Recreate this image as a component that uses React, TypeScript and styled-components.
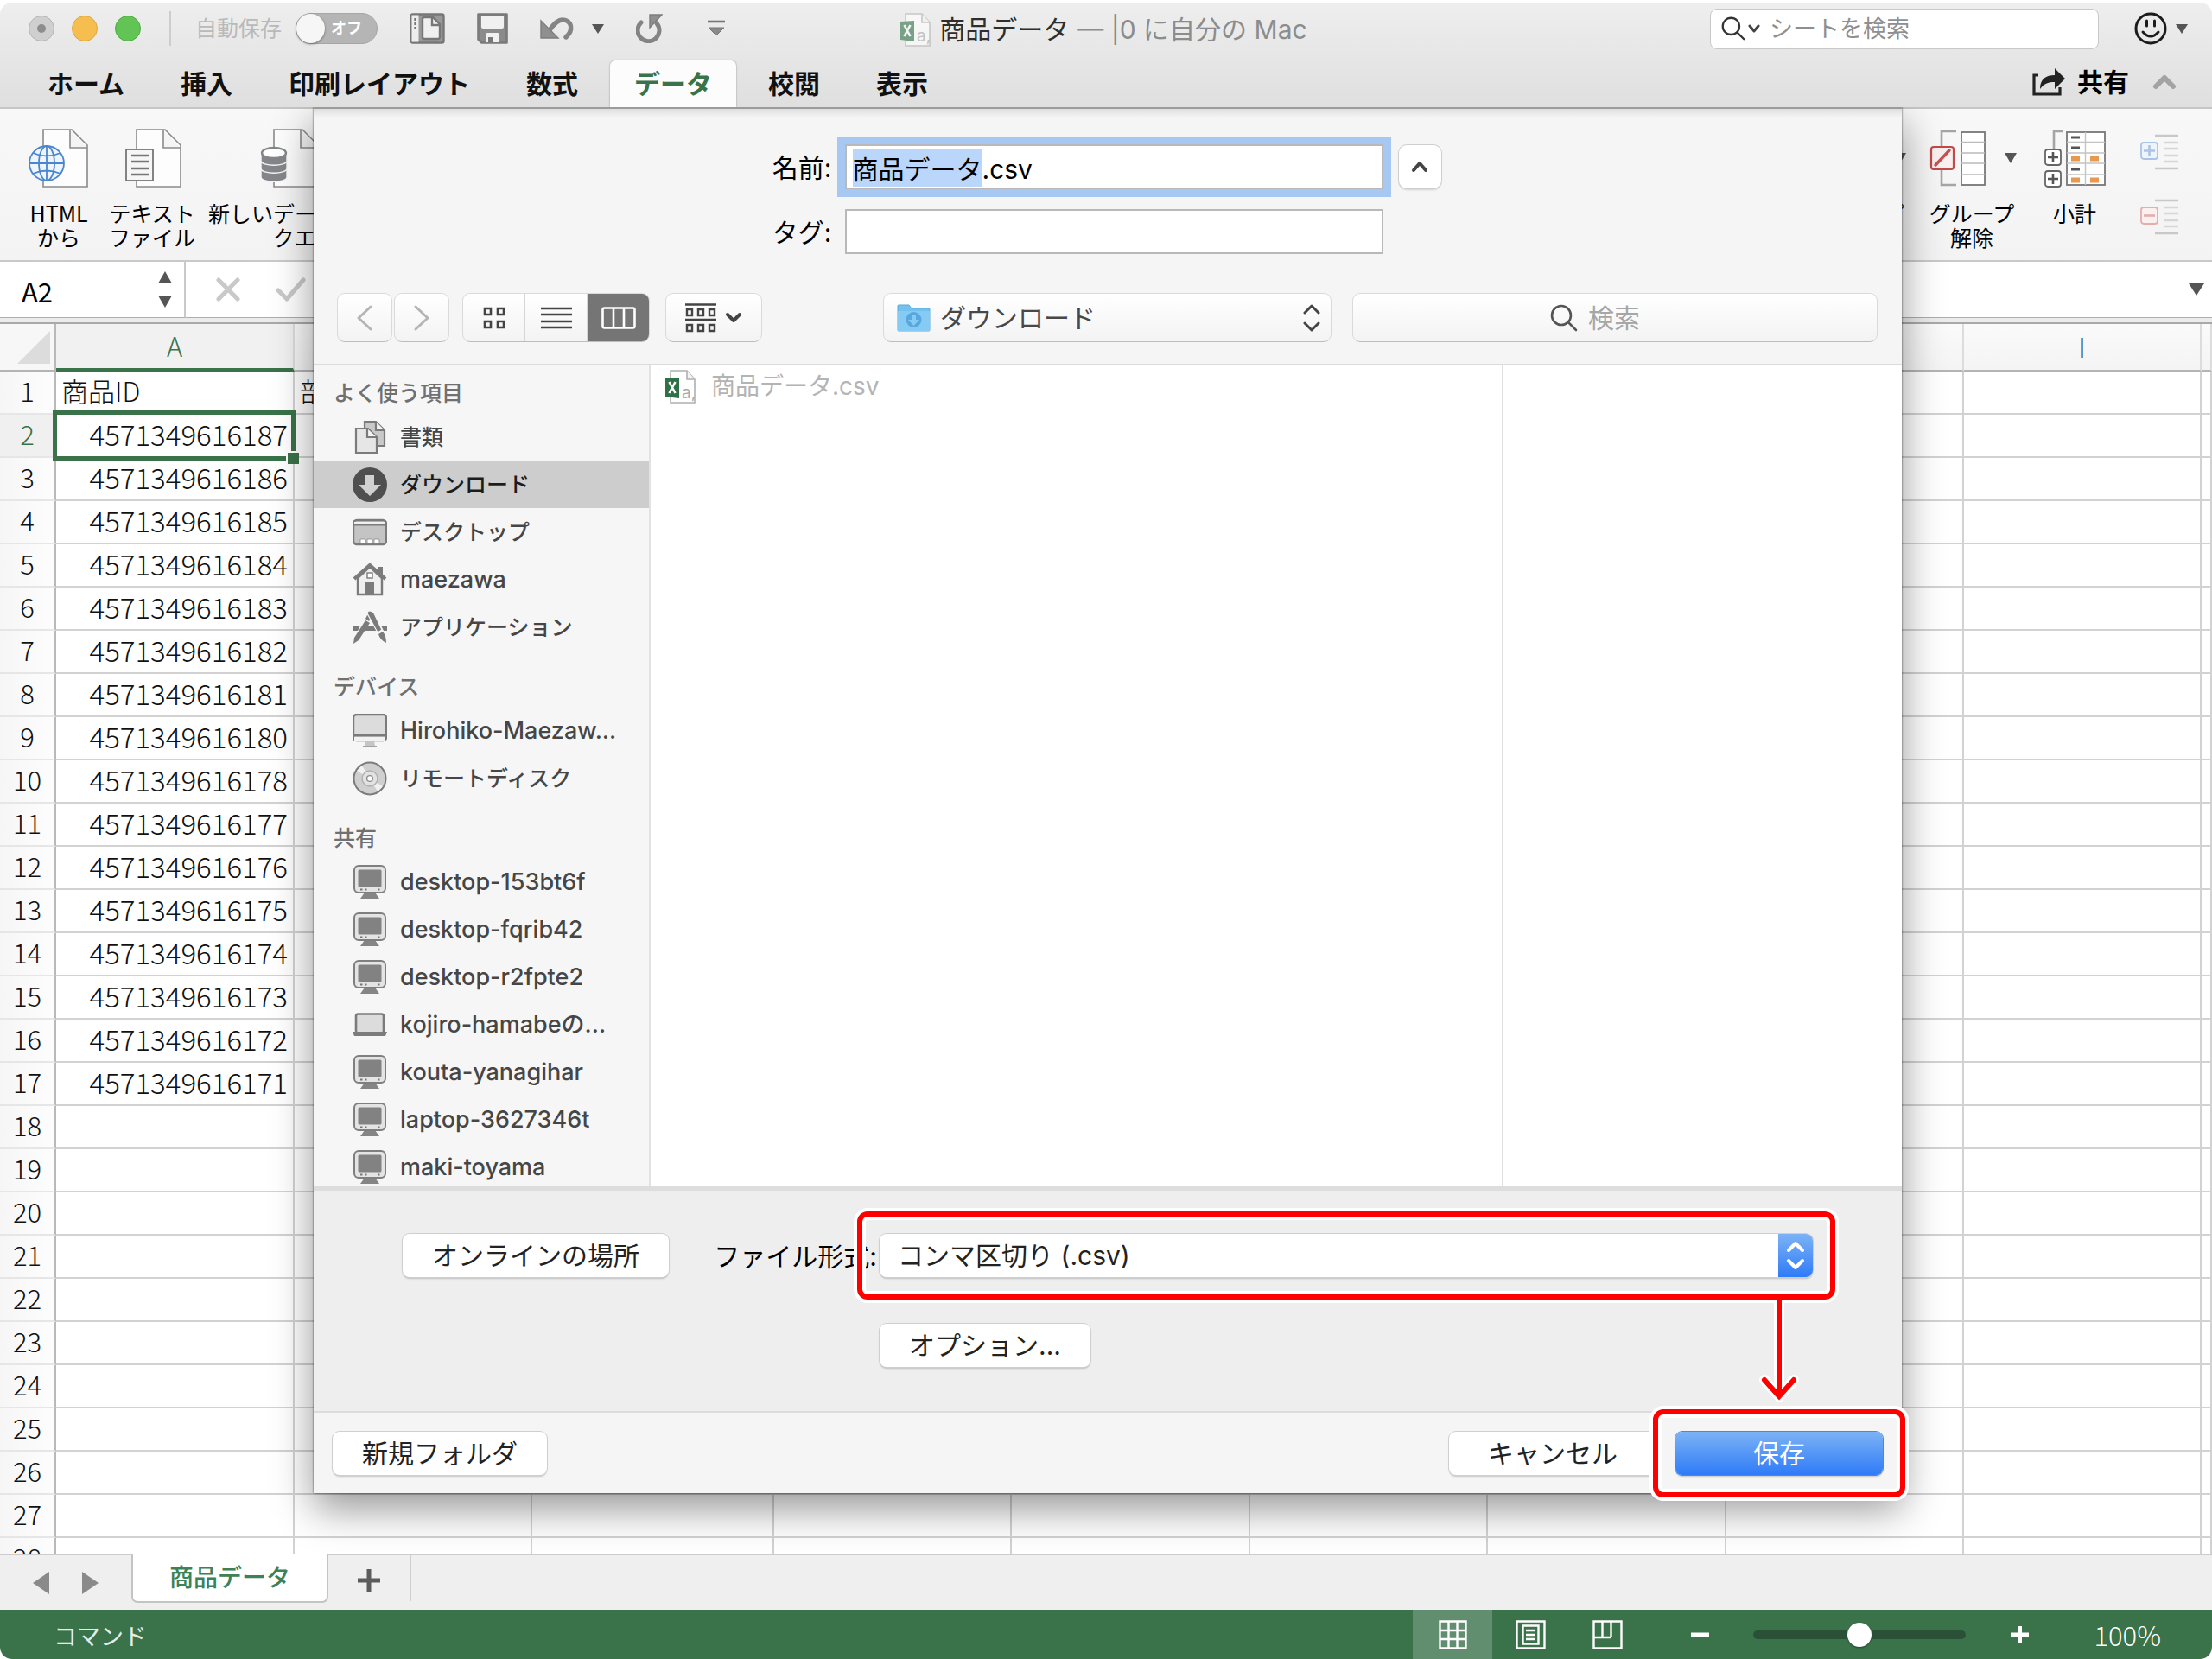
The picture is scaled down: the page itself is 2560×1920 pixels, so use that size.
import React, { useEffect, useRef } from 'react';
import styled, { createGlobalStyle } from 'styled-components';

const ui = `Inter, "Noto Sans CJK JP", sans-serif`;
const jp = `"Noto Sans CJK JP", sans-serif`;
const green = '#3a7249';

const GlobalStyle = createGlobalStyle`
  *, *::before, *::after { box-sizing: border-box; }
  html, body { margin: 0; background: #fff; }
  body { font-family: ${ui}; font-size: 30px; line-height: 44px; color: #000; }
  button, input, select { font: inherit; color: inherit; margin: 0; padding: 0; }
  button { background: none; border: 0; cursor: default; white-space: nowrap; }
  svg { display: block; flex: none; }
`;

const Window = styled.div`
  height: 100vh;
  padding-top: 3px;
  display: flex;
  flex-direction: column;
  overflow: hidden;
`;

/* ---------- title bar ---------- */

const TitleBar = styled.header`
  flex: none;
  background: linear-gradient(#eeeeee, #dfdfdf);
  border-bottom: 2px solid #c6c6c6;
  border-radius: 14px 14px 0 0;
`;

const TitleRow = styled.div`
  height: 60px;
  display: grid;
  grid-template-columns: 1fr auto 1fr;
  align-items: center;
`;

const QuickTools = styled.div`
  display: flex;
  align-items: center;
  gap: 37px;
  padding-left: 33px;
`;

const Lights = styled.div`
  display: flex;
  align-items: center;
  gap: 20px;
  margin-right: -4px;
`;

const Light = styled.button<{ $fill: string; $edge: string }>`
  width: 30px;
  height: 30px;
  border-radius: 50%;
  background: ${p => p.$fill};
  border: 1px solid ${p => p.$edge};
  display: grid;
  place-items: center;
`;

const Dot = styled.span`
  width: 10px;
  height: 10px;
  border-radius: 50%;
  background: #8d8d8d;
`;

const AutoSave = styled.label`
  display: flex;
  align-items: center;
  gap: 16px;
  padding-left: 28px;
  border-left: 2px solid #cdcdcd;
  height: 40px;
  font-size: 25px;
  color: #b9b9b9;
`;

const Toggle = styled.span`
  position: relative;
  width: 95px;
  height: 36px;
  border-radius: 18px;
  background: #b5b5b5;
  border: 1px solid #a6a6a6;
  color: #fff;
  font-size: 18px;
  line-height: 34px;
  font-weight: 700;
  padding-left: 40px;
  input {
    appearance: none;
    position: absolute;
    left: 0;
    top: 0;
    width: 33px;
    height: 34px;
    border-radius: 50%;
    background: #f6f6f6;
    box-shadow: 0 1px 3px rgba(0, 0, 0, 0.4);
  }
`;

const ToolButton = styled.button`
  display: flex;
  align-items: center;
  gap: 20px;
`;

const DocTitle = styled.h1`
  margin: 0;
  padding: 2px 5px 0 0;
  display: flex;
  align-items: center;
  gap: 10px;
  font-size: 30px;
  line-height: 44px;
  font-weight: 400;
  color: #2e2e2e;
  white-space: pre;
  span { color: #8c8c8c; }
`;

const TitleRight = styled.div`
  display: flex;
  align-items: center;
  justify-content: flex-end;
  gap: 41px;
  padding-right: 28px;
`;

const SheetSearch = styled.label`
  display: flex;
  align-items: center;
  width: 450px;
  height: 47px;
  padding-left: 12px;
  border: 1px solid #c8c8c8;
  border-radius: 8px;
  background: #fff;
  input {
    flex: 1;
    min-width: 0;
    border: 0;
    outline: 0;
    background: none;
    padding: 2px 0 0 8px;
    font-size: 27px;
  }
  input::placeholder { color: #8f8f8f; opacity: 1; }
`;

const FaceButton = styled.button`
  display: flex;
  align-items: center;
  gap: 10px;
`;

const TabRow = styled.nav`
  display: flex;
  align-items: stretch;
  gap: 9px;
  padding: 7px 40px 0 27px;
`;

const RibbonTab = styled.button<{ $active?: boolean }>`
  height: 54px;
  padding: 0 28px 4px;
  font-family: ${jp};
  font-weight: 700;
  color: ${p => (p.$active ? green : '#111')};
  background: ${p => (p.$active ? '#fcfcfc' : 'none')};
  border-radius: 6px 6px 0 0;
  box-shadow: ${p => (p.$active ? '0 0 2px rgba(0,0,0,.4)' : 'none')};
`;

const ShareGroup = styled.div`
  margin-left: auto;
  display: flex;
  align-items: center;
  gap: 26px;
  padding-bottom: 4px;
  font-weight: 700;
`;

const ShareButton = styled.button`
  display: flex;
  align-items: center;
  gap: 14px;
  font-weight: 700;
`;

/* ---------- ribbon ---------- */

const Workbook = styled.main`
  position: relative;
  flex: 1;
  min-height: 0;
  display: flex;
  flex-direction: column;
`;

const Ribbon = styled.section`
  flex: none;
  display: flex;
  justify-content: space-between;
  height: 177px;
  padding: 23px 38px 0 25px;
  background: linear-gradient(#f8f8f8, #f3f3f3);
  border-bottom: 2px solid #c9c9c9;
`;

const RibbonGroup = styled.div<{ $gap: number }>`
  display: flex;
  align-items: flex-start;
  gap: ${p => p.$gap}px;
`;

const RibbonButton = styled.button`
  min-width: 86px;
  display: flex;
  flex-direction: column;
  align-items: center;
  gap: 15px;
  font-family: ${jp};
  font-size: 25px;
  line-height: 28px;
  white-space: pre;
`;

const IconRow = styled.span`
  display: flex;
  align-items: center;
  gap: 22px;
`;

const SmallStack = styled.div`
  display: flex;
  flex-direction: column;
  gap: 33px;
  padding: 6px 0 0 9px;
`;

/* ---------- formula bar ---------- */

const FormulaBar = styled.section`
  flex: none;
  display: flex;
  height: 72px;
  padding-bottom: 5px;
  background: #ececec;
  border-bottom: 2px solid #a9a9a9;
`;

const NameBox = styled.label`
  display: flex;
  align-items: center;
  width: 215px;
  padding: 0 13px 0 25px;
  background: #fff;
  border-right: 2px solid #c9c9c9;
  border-bottom: 1px solid #adadad;
  input {
    width: 100%;
    border: 0;
    outline: 0;
    background: none;
    font-family: ${jp};
    font-size: 31px;
    padding-top: 4px;
  }
`;

const FormulaInput = styled.div`
  flex: 1;
  display: flex;
  align-items: center;
  gap: 39px;
  padding: 0 9px 0 34px;
  background: #fff;
  border-bottom: 1px solid #adadad;
  input { flex: 1; border: 0; outline: 0; background: none; }
`;

/* ---------- grid ---------- */

const Sheet = styled.div`
  flex: 1;
  min-height: 0;
  overflow: hidden;
  background: #fff;
`;

const Grid = styled.table`
  width: 100%;
  table-layout: fixed;
  border-collapse: separate;
  border-spacing: 0;
  font-family: ${jp};
  font-size: 31px;
  font-weight: 300;
  line-height: 44px;
  color: #111;
`;

const Corner = styled.td`
  height: 55px;
  padding: 0;
  background: #f7f7f7;
  border-right: 2px solid #b9b9b9;
  border-bottom: 2px solid #b4b4b4;
  svg { margin-left: 20px; }
`;

const ColHead = styled.th<{ $active?: boolean }>`
  height: 55px;
  padding: 0 0 2px;
  font-weight: 300;
  color: ${p => (p.$active ? green : '#111')};
  background: ${p => (p.$active ? '#f1f1f1' : 'linear-gradient(#fafafa, #f4f4f4)')};
  border-right: 2px solid #dcdcdc;
  border-bottom: ${p => (p.$active ? `4px solid ${green}` : '2px solid #b4b4b4')};
`;

const RowHead = styled.th<{ $active?: boolean }>`
  height: 50px;
  padding: 0 0 4px;
  font-weight: 300;
  color: ${p => (p.$active ? green : '#111')};
  background: ${p => (p.$active ? '#f0f0f0' : 'linear-gradient(90deg, #f6f6f6, #fdfdfd)')};
  border-right: 2px solid #b9b9b9;
  border-bottom: 2px solid #e6e6e6;
`;

const Cell = styled.td<{ $number?: boolean }>`
  position: relative;
  height: 50px;
  padding: 0 6px 4px;
  text-align: ${p => (p.$number ? 'right' : 'left')};
  font-size: ${p => (p.$number ? 33 : 31)}px;
  white-space: nowrap;
  border-right: 2px solid #d2d2d2;
  border-bottom: 2px solid #d2d2d2;
`;

const Cursor = styled.span`
  position: absolute;
  z-index: 1;
  inset: -5px -3px -5px -4px;
  border: 5px solid ${green};
  &::after {
    content: '';
    position: absolute;
    right: -9px;
    bottom: -9px;
    width: 15px;
    height: 15px;
    background: ${green};
    border: solid #fff;
    border-width: 2px 0 0 2px;
  }
`;

/* ---------- sheet tabs and status bar ---------- */

const SheetTabs = styled.footer`
  flex: none;
  display: flex;
  height: 65px;
  padding-left: 38px;
  background: #efefef;
  border-top: 2px solid #cccccc;
`;

const Pager = styled.div`
  display: flex;
  align-items: center;
  gap: 38px;
  margin-right: 38px;
`;

const SheetTab = styled.button`
  height: 57px;
  margin-top: -2px;
  padding: 0 42px 3px;
  font-family: ${jp};
  font-size: 28px;
  font-weight: 500;
  color: #3d8157;
  background: #fff;
  border: solid #c4c4c4;
  border-width: 0 2px 2px;
  border-radius: 0 0 7px 7px;
`;

const AddSheet = styled.button`
  width: 96px;
  height: 53px;
  display: grid;
  place-items: center;
  border-right: 2px solid #cfcfcf;
  padding-top: 4px;
`;

const StatusBar = styled.footer`
  flex: none;
  display: flex;
  align-items: center;
  height: 57px;
  padding: 0 59px 0 62px;
  background: ${green};
  border-radius: 0 0 14px 14px;
  color: #fff;
`;

const StatusText = styled.span`
  margin-right: auto;
  padding-top: 2px;
  font-family: ${jp};
  font-size: 27px;
  color: #e4ede7;
`;

const ViewButton = styled.button<{ $active?: boolean; $wide?: number }>`
  width: ${p => p.$wide ?? 89}px;
  height: 57px;
  display: grid;
  place-items: center;
  background: ${p => (p.$active ? '#628e70' : 'none')};
`;

const ZoomSlider = styled.input`
  appearance: none;
  width: 246px;
  height: 10px;
  border-radius: 5px;
  background: #2a5138;
  outline: 0;
  &::-webkit-slider-thumb {
    appearance: none;
    width: 28px;
    height: 28px;
    border-radius: 50%;
    background: #fff;
    box-shadow: 0 1px 2px rgba(0, 0, 0, 0.4);
  }
`;

const ZoomValue = styled.output`
  padding-left: 24px;
  font-family: ${jp};
  font-size: 31px;
  font-weight: 300;
`;

/* ---------- save sheet ---------- */

const Overlay = styled.div`
  position: absolute;
  z-index: 2;
  inset: -2px 0 0;
  display: flex;
  padding: 0 359px 135px 363px;
  overflow: hidden;
`;

const Dialog = styled.form`
  flex: 1;
  min-width: 0;
  display: flex;
  flex-direction: column;
  background: #f5f5f5;
  border-top: 2px solid #9b9b9b;
  box-shadow: 0 0 2px rgba(0, 0, 0, 0.7), 0 18px 44px rgba(0, 0, 0, 0.42);
`;

const Fields = styled.div`
  display: grid;
  grid-template-columns: 1fr 623px 1fr;
  column-gap: 15px;
  row-gap: 23px;
  align-items: center;
  padding: 41px 0 45px 14px;
  background: linear-gradient(#dedede, #f5f5f5 10px);
`;

const FieldLabel = styled.label`
  padding-top: 2px;
  text-align: right;
`;

const TextField = styled.input<{ $focus?: boolean }>`
  width: 100%;
  height: 52px;
  padding: 2px 7px 0;
  border: 2px solid #b9b9b9;
  background: #fff;
  outline: ${p => (p.$focus ? '9px solid #a6c8f3' : '0')};
  border-radius: 0;
  &::selection { background: rgba(185, 214, 251, 0.99); color: #000; }
`;

const Collapse = styled.button`
  width: 49px;
  height: 50px;
  margin-left: 3px;
  display: grid;
  place-items: center;
  background: #fff;
  border-radius: 9px;
  box-shadow: 0 0 0 1px #cfcfcf, 0 2px 2px rgba(0, 0, 0, 0.15);
`;

const Toolbar = styled.div`
  display: flex;
  box-sizing: content-box;
  height: 57px;
  padding: 0 28px 25px 27px;
  border-bottom: 2px solid #dbdbdb;
`;

const toolSurface = `
  background: linear-gradient(#ffffff, #f3f3f3);
  border: 1px solid #dadada;
  border-bottom-color: #bdbdbd;
  border-radius: 9px;
`;

const NavButton = styled.button`
  width: 64px;
  margin-right: 2px;
  display: grid;
  place-items: center;
  ${toolSurface}
`;

const Segments = styled.div`
  display: flex;
  width: 217px;
  margin-left: 13px;
  overflow: hidden;
  ${toolSurface}
`;

const Segment = styled.button<{ $active?: boolean }>`
  flex: 1;
  display: grid;
  place-items: center;
  background: ${p => (p.$active ? '#757575' : 'none')};
  & + & { border-left: 1px solid #d6d6d6; }
`;

const Arrange = styled.button`
  width: 112px;
  margin: 0 140px 0 18px;
  display: flex;
  align-items: center;
  justify-content: center;
  gap: 10px;
  ${toolSurface}
`;

const PathBox = styled.label`
  display: flex;
  align-items: center;
  width: 519px;
  gap: 11px;
  padding: 0 11px 0 15px;
  color: #484848;
  ${toolSurface}
  select {
    flex: 1;
    appearance: none;
    border: 0;
    outline: 0;
    background: none;
  }
`;

const FinderSearch = styled.label`
  flex: 1;
  display: flex;
  align-items: center;
  justify-content: center;
  gap: 12px;
  margin-left: 24px;
  ${toolSurface}
  input {
    width: 106px;
    border: 0;
    outline: 0;
    background: none;
  }
  input::placeholder { color: #a6a6a6; opacity: 1; }
`;

const Browser = styled.div`
  flex: 1;
  min-height: 0;
  display: flex;
  background: #fff;
`;

const Sidebar = styled.aside`
  flex: none;
  width: 390px;
  padding-top: 10px;
  overflow: hidden;
  background: #f6f6f6;
  border-right: 2px solid #e2e2e2;
`;

const SideHeading = styled.h2`
  margin: 0;
  padding-left: 23px;
  font-size: 25px;
  line-height: 45px;
  font-weight: 500;
  color: #707070;
  ul + & { margin-top: 20px; }
`;

const SideList = styled.ul`
  margin: 0;
  padding: 0;
  list-style: none;
`;

const SideItem = styled.button<{ $active?: boolean; $latin?: boolean }>`
  width: 100%;
  height: 55px;
  display: flex;
  align-items: center;
  gap: 15px;
  padding-left: 45px;
  font-size: ${p => (p.$latin ? 27 : 25)}px;
  font-weight: 500;
  color: ${p => (p.$active ? '#1c1c1c' : '#464646')};
  background: ${p => (p.$active ? '#cdcdcd' : 'none')};
`;

const FileColumn = styled.div`
  flex: none;
  width: 53.7%;
  border-right: 2px solid #e0e0e0;
  padding: 2px 0 0 17px;
`;

const FileRow = styled.button`
  display: flex;
  align-items: center;
  gap: 18px;
  height: 44px;
  font-size: 28px;
  color: #b4b4b4;
`;

const Options = styled.div`
  display: grid;
  grid-template-columns: auto 1fr 1080px;
  align-items: center;
  row-gap: 54px;
  padding: 50px 103px 51px;
  background: #eeeeee;
  border-top: 5px solid #dddddd;
  border-bottom: 2px solid #dcdcdc;
`;

const FormatLabel = styled.label`
  padding: 2px 3px 0 0;
  text-align: right;
`;

const PushButton = styled.button<{ $primary?: boolean; $wide?: boolean }>`
  height: 50px;
  padding: 0 34px;
  min-width: ${p => (p.$wide ? '240px' : '0')};
  justify-self: start;
  line-height: 48px;
  border-radius: 8px;
  color: ${p => (p.$primary ? '#fff' : '#222')};
  background: ${p => (p.$primary ? 'linear-gradient(#7cb3f5, #2f7bf8)' : '#fff')};
  box-shadow: 0 0 0 1px ${p => (p.$primary ? '#4488ee' : '#cfcfcf')}, 0 2px 2px rgba(0, 0, 0, 0.2);
`;

const OptionsButtonCell = styled.div`
  grid-column: 3;
  display: flex;
`;

/* A red outline with a white halo that surrounds the control it wraps. */
const Highlight = styled.div`
  position: relative;
  &::after {
    content: '';
    position: absolute;
    inset: -26px;
    border: 6px solid #ff0000;
    border-radius: 12px;
    box-shadow: 0 0 0 4px #fff, inset 0 0 0 4px #fff;
    pointer-events: none;
  }
`;

const FlowArrow = styled.svg`
  position: absolute;
  right: 16px;
  top: 76px;
  z-index: 1;
`;

const FormatSelect = styled.div`
  display: flex;
  height: 50px;
  border-radius: 8px;
  background: #fff;
  overflow: hidden;
  box-shadow: 0 0 0 1px #cfcfcf, 0 2px 2px rgba(0, 0, 0, 0.2);
  select {
    flex: 1;
    appearance: none;
    border: 0;
    outline: 0;
    background: none;
    padding-left: 21px;
    color: #222;
  }
`;

const Stepper = styled.span`
  width: 40px;
  display: grid;
  place-items: center;
  background: linear-gradient(#7cb3f5, #2f7bf8);
`;

const Actions = styled.div`
  display: flex;
  align-items: center;
  gap: 22px;
  padding: 22px 22px 21px;
  & > :first-child { margin-right: auto; }
`;

/* ---------- drawings ---------- */

const Caret = ({ w = 14, h = 13, color = '#555' }: { w?: number; h?: number; color?: string }) => (
  <svg width={w} height={h} viewBox="0 0 14 13" preserveAspectRatio="none"><path d="M0 0h14L7 13z" fill={color} /></svg>
);

const Chevron = ({ d, w, h, color = '#444', sw = 4 }: { d: string; w: number; h: number; color?: string; sw?: number }) => (
  <svg width={w} height={h} fill="none" stroke={color} strokeWidth={sw} strokeLinecap="round" strokeLinejoin="round"><path d={d} /></svg>
);

const Magnifier = ({ size, color }: { size: number; color: string }) => (
  <svg width={size} height={size} viewBox="0 0 32 32" fill="none" stroke={color} strokeWidth="2.6" strokeLinecap="round">
    <circle cx="13" cy="13" r="11" /><path d="M21 21l9 9" />
  </svg>
);

const CsvIcon = ({ faded }: { faded?: boolean }) => (
  <svg width="35" height="39" viewBox="0 0 35 39" opacity={faded ? 0.6 : 1}>
    <path d="M6 1h19l9 10v27H6z" fill="#fff" stroke="#b0b0b0" strokeWidth="1.6" />
    <path d="M25 1v10h9" fill="#f3f3f3" stroke="#b0b0b0" strokeWidth="1.6" />
    <path d="M0 10l16-1v24L0 31z" fill="#2d7145" />
    <path d="M4.500 14l7 13M11.500 14l-7 13" stroke="#fff" strokeWidth="2.6" />
    <text x="19" y="33" fontSize="19" fontFamily="Inter" fill="#aaa">a,</text>
  </svg>
);

const page = 'M17 1h33l18 18v48H17z';
const RibbonPage = ({ children }: { children: React.ReactNode }) => (
  <svg width="70" height="68" viewBox="0 0 70 68">
    <path d={page} fill="#fdfdfd" stroke="#8a8a8a" strokeWidth="1.6" />
    <path d="M48 1v21h20" fill="#f4f4f4" stroke="#8a8a8a" strokeWidth="1.6" />
    {children}
  </svg>
);

const GlobePage = () => (
  <RibbonPage>
    <g fill="none" stroke="#4a86cf" strokeWidth="1.8">
      <circle cx="21" cy="40" r="20" fill="#eef5fd" />
      <ellipse cx="21" cy="40" rx="9" ry="20" />
      <path d="M1 40h40M21 20v40M5 28q16 7 32 0M5 52q16-7 32 0" />
    </g>
  </RibbonPage>
);

const TextPage = () => (
  <RibbonPage>
    <rect x="5" y="24" width="31" height="36" fill="#f6f6f6" stroke="#777" strokeWidth="1.8" />
    <path d="M11 31h20M11 38h20M11 46h20M11 53h20" stroke="#777" strokeWidth="2.4" />
  </RibbonPage>
);

const DatabasePage = () => (
  <RibbonPage>
    <g fill="#85868a" stroke="#f7f7f7" strokeWidth="1.4">
      <path d="M2 46v10c0 7 30 7 30 0V46z" />
      <path d="M2 37v9c0 7 30 7 30 0v-9z" />
      <path d="M2 27v10c0 7 30 7 30 0V27z" />
    </g>
    <ellipse cx="17" cy="28" rx="14" ry="6" fill="#fff" stroke="#85868a" strokeWidth="2.4" />
  </RibbonPage>
);

const UngroupIcon = () => (
  <svg width="68" height="68" viewBox="0 0 68 68" fill="none">
    <path d="M34 3H17v62h17" stroke="#a5a5a5" strokeWidth="2.6" />
    <rect x="5" y="21" width="26" height="26" rx="3" fill="#fbeeee" stroke="#c04a48" strokeWidth="2.2" />
    <path d="M10 42l16-17" stroke="#c45350" strokeWidth="3.4" strokeLinecap="round" />
    <rect x="40" y="4" width="27" height="61" fill="#fff" stroke="#777" strokeWidth="1.8" />
    <path d="M40 15.500h27M40 28h27M40 40h27M40 53h27" stroke="#bbb" strokeWidth="1.6" />
  </svg>
);

const SubtotalIcon = () => (
  <svg width="71" height="68" viewBox="0 0 71 68" fill="none">
    <path d="M22 3H11v20" stroke="#a5a5a5" strokeWidth="2.6" />
    <rect x="26" y="4" width="44" height="61" fill="#fff" stroke="#777" strokeWidth="1.8" />
    <path d="M26 15.500h44M26 28h44M26 40h44M26 53h44M47.500 4v61" stroke="#c4c4c4" strokeWidth="1.4" />
    <path d="M31 10h10M31 22h10M31 47h10" stroke="#555" strokeWidth="3" />
    <path d="M31 34.500h10M53 34.500h10M31 59.500h10M53 59.500h10" stroke="#e8994f" strokeWidth="6" />
    <g stroke="#666" strokeWidth="1.8" fill="#fff">
      <rect x="1" y="24" width="18" height="18" rx="3" /><rect x="1" y="49" width="18" height="18" rx="3" />
    </g>
    <path d="M4 33h12M10 27v12M4 58h12M10 52v12" stroke="#555" strokeWidth="2.6" />
  </svg>
);

const OutlineIcon = ({ color, fill, plus }: { color: string; fill: string; plus?: boolean }) => (
  <svg width="45" height="42" viewBox="0 0 45 42" fill="none">
    <path d="M17 2h27M17 40h27" stroke="#c8c8c8" strokeWidth="2.4" />
    <path d="M27 10h17M27 17h17M27 25h17M27 32h17" stroke="#d6d6d6" strokeWidth="2.4" />
    <rect x="1" y="10" width="19" height="19" rx="3" fill={fill} stroke={color} strokeWidth="1.8" />
    <path d={plus ? 'M4 19.500h13M10.500 13v13' : 'M4 19.500h13'} stroke={color} strokeWidth="2.6" />
  </svg>
);

const sideIcons: Record<string, React.ReactNode> = {
  docs: (
    <g fill="#c9c9c9" stroke="#7b7b7b" strokeWidth="2.2">
      <path d="M14 2h13l10 10v18H14z" /><path d="M27 2v10h10" fill="#f4f4f4" />
      <path d="M4 10h14l10 10v18H4z" fill="#e6e6e6" /><path d="M17 10v10h11" fill="#f4f4f4" />
    </g>
  ),
  download: (
    <>
      <circle cx="20" cy="20" r="20" fill="#4f4f4f" />
      <path d="M15 9h10v11h8L20 33 7 20h8z" fill="#d0d0d0" />
    </>
  ),
  desktop: (
    <>
      <rect x="1" y="6" width="38" height="28" rx="4" fill="#c4c4c4" stroke="#7b7b7b" strokeWidth="2.4" />
      <path d="M2 8h36v3H2z" fill="#f0f0f0" /><path d="M2 11.500h36" stroke="#7b7b7b" strokeWidth="1.8" />
      <path d="M9 28h6v5H9zM17 28h6v5h-6zM25 28h6v5h-6z" fill="#fff" stroke="#8a8a8a" strokeWidth="0.8" />
    </>
  ),
  home: (
    <>
      <path d="M6 18v19h28V18L20 5z" fill="#efefef" stroke="#7b7b7b" strokeWidth="2.4" />
      <path d="M2 19L20 3l18 16" fill="none" stroke="#7b7b7b" strokeWidth="4" />
      <path d="M30 5h5v12l-5-5z" fill="#7b7b7b" />
      <path d="M15 23h10v14H15z" fill="#7b7b7b" />
      <rect x="17" y="12" width="6" height="6" fill="#fff" stroke="#7b7b7b" strokeWidth="1.4" />
    </>
  ),
  apps: (
    <g fill="#7b7b7b">
      <path d="M0 18h9l-3 6H0zM15 18h10l3 6H12zM33 18h7v6h-4z" />
      <path d="M15 12l5 3L7 35l-6 4 1-7z" />
      <path d="M17 6q3 0 4 3l-2 4-4-3z" />
      <path d="M17 4q0-3 3-3t5 3l9 19-5 3z" stroke="#f6f6f6" strokeWidth="1.2" />
      <path d="M30 28l5-3q4 5 4 13-7-3-9-10z" />
    </g>
  ),
  imac: (
    <>
      <rect x="1" y="1" width="38" height="30" rx="3.500" fill="#dcdcdc" stroke="#7b7b7b" strokeWidth="2.4" />
      <path d="M1 25h38" stroke="#7b7b7b" strokeWidth="3" />
      <path d="M2 27h36v4H2z" fill="#f2f2f2" />
      <path d="M15 32h10l1 5H14z" fill="#c5c5c5" /><path d="M12 38h16" stroke="#9a9a9a" strokeWidth="1.8" />
    </>
  ),
  disc: (
    <>
      <circle cx="20" cy="20" r="18.500" fill="#cfcfcf" stroke="#7b7b7b" strokeWidth="2" />
      <path d="M20 20L5 11l6-6zM20 20l15 9-6 6z" fill="#f1f1f1" />
      <circle cx="20" cy="20" r="9" fill="#e2e2e2" stroke="#b0b0b0" strokeWidth="1.4" />
      <circle cx="20" cy="20" r="3.400" fill="#fff" stroke="#8f8f8f" strokeWidth="1.4" />
    </>
  ),
  pc: (
    <>
      <path d="M14 32h12l5 7H9z" fill="#858585" />
      <rect x="2" y="1" width="36" height="31" rx="5" fill="#e4e4e4" stroke="#7f7f7f" strokeWidth="2" />
      <rect x="6.500" y="5.500" width="27" height="20" rx="1.500" fill="#828282" />
      <path d="M9 28.500h2.500M14 28.500h2.500M29 28.500h2.500" stroke="#777" strokeWidth="2" />
    </>
  ),
  laptop: (
    <>
      <rect x="4" y="7.500" width="32" height="22" rx="2.500" fill="#dcdcdc" stroke="#7b7b7b" strokeWidth="2.600" />
      <path d="M0 28h40l-2 5H2z" fill="#7b7b7b" />
    </>
  ),
};

const updown = (color: string, sw: number) => (
  <Chevron w={22} h={34} color={color} sw={sw} d="M3 11l8-8 8 8M3 23l8 8 8-8" />
);

/* ---------- data ---------- */

const tabs = ['ホーム', '挿入', '印刷レイアウト', '数式', 'データ', '校閲', '表示'];

const ids = [
  '4571349616187', '4571349616186', '4571349616185', '4571349616184', '4571349616183', '4571349616182',
  '4571349616181', '4571349616180', '4571349616178', '4571349616177', '4571349616176', '4571349616175',
  '4571349616174', '4571349616173', '4571349616172', '4571349616171',
];

const columns = [
  ['A', 276], ['B', 275], ['C', 280], ['D', 275], ['E', 276], ['F', 275], ['G', 276], ['H', 275], ['I', 275],
] as const;

const places = [
  { title: 'よく使う項目', items: [['docs', '書類'], ['download', 'ダウンロード'], ['desktop', 'デスクトップ'], ['home', 'maezawa'], ['apps', 'アプリケーション']] },
  { title: 'デバイス', items: [['imac', 'Hirohiko-Maezaw...'], ['disc', 'リモートディスク']] },
  {
    title: '共有',
    items: [['pc', 'desktop-153bt6f'], ['pc', 'desktop-fqrib42'], ['pc', 'desktop-r2fpte2'], ['laptop', 'kojiro-hamabeの...'],
      ['pc', 'kouta-yanagihar'], ['pc', 'laptop-3627346t'], ['pc', 'maki-toyama']],
  },
];

/* ---------- sections ---------- */

const Header = () => (
  <TitleBar>
    <TitleRow>
      <QuickTools>
        <Lights>
          <Light type="button" aria-label="閉じる" $fill="#cfcfcf" $edge="#b3b3b3"><Dot /></Light>
          <Light type="button" aria-label="しまう" $fill="#f6be4f" $edge="#dfa63c" />
          <Light type="button" aria-label="拡大" $fill="#61c454" $edge="#4dab41" />
        </Lights>
        <AutoSave>
          自動保存
          <Toggle><input type="checkbox" />オフ</Toggle>
        </AutoSave>
        <ToolButton type="button" aria-label="テンプレート">
          <svg width="41" height="36" viewBox="0 0 41 36" fill="none" stroke="#777" strokeWidth="2.400">
            <rect x="1.500" y="1.500" width="38" height="33" rx="2" fill="#999" />
            <rect x="2.500" y="2.500" width="8" height="31" fill="#eee" stroke="none" />
            <path d="M6.500 6v13" strokeDasharray="3 2" />
            <path d="M17 5h10l8 8v15q0 2-2 2H17q-2 0-2-2V7q0-2 2-2z" fill="#efefef" /><path d="M26 5v9h9" />
          </svg>
        </ToolButton>
        <ToolButton type="button" aria-label="保存">
          <svg width="36" height="36" viewBox="0 0 36 36">
            <path d="M1.500 1.500h33v33h-29l-4-4z" fill="#8b8b8b" stroke="#7a7a7a" strokeWidth="2.600" strokeLinejoin="round" />
            <path d="M5 3h26v13q0 2-2 2H7q-2 0-2-2z" fill="#f1f1f1" />
            <path d="M12 23h12q2 0 2 2v9H10v-9q0-2 2-2z" fill="#f1f1f1" /><path d="M13 28h5v6h-5z" fill="#777" />
          </svg>
        </ToolButton>
        <ToolButton type="button" aria-label="元に戻す">
          <svg width="40" height="28" viewBox="0 0 40 28"><path d="M11 16Q19 4 26 4c11 0 13 12 4 20" fill="none" stroke="#848484" strokeWidth="5.400" strokeLinecap="round" /><path d="M1 5v20h20z" fill="#8f8f8f" stroke="#7d7d7d" strokeWidth="1.400" /></svg>
          <Caret h={11} />
        </ToolButton>
        <ToolButton type="button" aria-label="やり直す">
          <svg width="31" height="34" viewBox="0 0 31 34"><path d="M6 10a12.500 12.500 0 1 0 18 1" fill="none" stroke="#848484" strokeWidth="5" strokeLinecap="round" /><path d="M16 1h14L16 16z" fill="#8f8f8f" stroke="#7d7d7d" strokeWidth="1.400" /></svg>
        </ToolButton>
        <ToolButton type="button" aria-label="ツールバーのカスタマイズ">
          <svg width="48" height="20" viewBox="0 0 48 20"><path d="M15 2h20" stroke="#777" strokeWidth="2.600" /><path d="M16 9h18l-9 9z" fill="#8a8a8a" stroke="#777" /></svg>
        </ToolButton>
      </QuickTools>
      <DocTitle><CsvIcon faded />商品データ<span>— |0 に自分の Mac</span></DocTitle>
      <TitleRight>
        <SheetSearch>
          <Magnifier size={28} color="#333" />
          <Chevron w={20} h={12} sw={3} d="M5 3l5 6 5-6" />
          <input placeholder="シートを検索" aria-label="シートを検索" />
        </SheetSearch>
        <FaceButton type="button" aria-label="フィードバック">
          <svg width="38" height="38" viewBox="0 0 38 38" fill="none" stroke="#1c1c1c" strokeWidth="3">
            <circle cx="19" cy="19" r="17" /><path d="M14.500 10v6M23.500 10v6" strokeLinecap="round" /><path d="M10 23q9 10 18 0" strokeLinecap="round" />
          </svg>
          <Caret h={11} />
        </FaceButton>
      </TitleRight>
    </TitleRow>
    <TabRow>
      {tabs.map(t => <RibbonTab key={t} type="button" $active={t === 'データ'}>{t}</RibbonTab>)}
      <ShareGroup>
        <ShareButton type="button">
          <svg width="38" height="32" viewBox="0 0 38 32"><path d="M7 8H2v22h30v-8" fill="none" stroke="#222" strokeWidth="3.200" /><path d="M9 24C9 12 16 8 26 8V0l12 12-12 12v-8c-7 0-12 1-17 8z" fill="#222" /></svg>
          共有
        </ShareButton>
        <ToolButton type="button" aria-label="リボンを閉じる"><Chevron w={30} h={20} color="#a3a3a3" sw={6} d="M5 15l10-10 10 10" /></ToolButton>
      </ShareGroup>
    </TabRow>
  </TitleBar>
);

const RibbonPanel = () => (
  <Ribbon>
    <RibbonGroup $gap={15}>
      <RibbonButton type="button"><GlobePage />{'HTML\nから'}</RibbonButton>
      <RibbonButton type="button"><TextPage />{'テキスト\nファイル'}</RibbonButton>
      <RibbonButton type="button"><IconRow><DatabasePage /><Caret /></IconRow>{'新しいデータベース\nクエリ'}</RibbonButton>
    </RibbonGroup>
    <RibbonGroup $gap={24}>
      <RibbonButton type="button"><IconRow><UngroupIcon /><Caret h={12} /></IconRow>グループ</RibbonButton>
      <RibbonButton type="button"><IconRow><UngroupIcon /><Caret h={12} /></IconRow>{'グループ\n解除'}</RibbonButton>
      <RibbonButton type="button"><SubtotalIcon />小計</RibbonButton>
      <SmallStack>
        <ToolButton type="button" aria-label="詳細の表示"><OutlineIcon plus color="#a9c4e6" fill="#eef4fb" /></ToolButton>
        <ToolButton type="button" aria-label="詳細を隠す"><OutlineIcon color="#e3aeac" fill="#faf0f0" /></ToolButton>
      </SmallStack>
    </RibbonGroup>
  </Ribbon>
);

const Formula = () => (
  <FormulaBar>
    <NameBox>
      <input defaultValue="A2" aria-label="名前ボックス" />
      <svg width="18" height="42" viewBox="0 0 18 42"><path d="M9 0l8 14H1zM9 42l8-14H1z" fill="#555" /></svg>
    </NameBox>
    <FormulaInput>
      <Chevron w={30} h={28} color="#c9c9c9" sw={5} d="M4 3l22 22M26 3L4 25" />
      <Chevron w={38} h={28} color="#c9c9c9" sw={5} d="M4 15l10 10L33 3" />
      <input aria-label="数式" />
      <Caret w={18} h={14} />
    </FormulaInput>
  </FormulaBar>
);

const SheetGrid = () => (
  <Sheet>
    <Grid>
      <colgroup>
        <col width={65} />
        {columns.map(([name, w]) => <col key={name} width={w} />)}
        <col />
      </colgroup>
      <thead>
        <tr>
          <Corner><svg width="38" height="38"><path d="M38 0v38H0z" fill="#dcdcdc" /></svg></Corner>
          {columns.map(([name]) => <ColHead key={name} scope="col" $active={name === 'A'}>{name}</ColHead>)}
          <ColHead />
        </tr>
      </thead>
      <tbody>
        {Array.from({ length: 28 }, (_, i) => (
          <tr key={i}>
            <RowHead scope="row" $active={i === 1}>{i + 1}</RowHead>
            <Cell $number={i > 0}>{i === 0 ? '商品ID' : ids[i - 1]}{i === 1 && <Cursor />}</Cell>
            <Cell>{i === 0 ? '部' : ''}</Cell>
            {columns.slice(2).map(([name]) => <Cell key={name} />)}
            <Cell />
          </tr>
        ))}
      </tbody>
    </Grid>
  </Sheet>
);

const SaveDialog = () => {
  const nameRef = useRef<HTMLInputElement>(null);
  useEffect(() => {
    nameRef.current?.focus();
    nameRef.current?.setSelectionRange(0, 5);
  }, []);

  return (
    <Overlay>
      <Dialog role="dialog" aria-label="保存" onSubmit={e => e.preventDefault()}>
        <Fields>
          <FieldLabel htmlFor="name">名前:</FieldLabel>
          <TextField id="name" ref={nameRef} defaultValue="商品データ.csv" $focus />
          <Collapse type="button" aria-label="折りたたむ"><Chevron w={22} h={16} d="M4 12l7-8 7 8" /></Collapse>
          <FieldLabel htmlFor="tags">タグ:</FieldLabel>
          <TextField id="tags" />
        </Fields>
        <Toolbar>
          <NavButton type="button" aria-label="戻る"><Chevron w={20} h={32} color="#b5b5b5" sw={3} d="M17 3L3 16l14 13" /></NavButton>
          <NavButton type="button" aria-label="進む"><Chevron w={20} h={32} color="#b5b5b5" sw={3} d="M3 3l14 13L3 29" /></NavButton>
          <Segments>
            <Segment type="button" aria-label="アイコン">
              <svg width="26" height="26" fill="none" stroke="#444" strokeWidth="2.600"><path d="M2 2h7v7H2zM17 2h7v7h-7zM2 17h7v7H2zM17 17h7v7h-7z" /></svg>
            </Segment>
            <Segment type="button" aria-label="リスト">
              <svg width="36" height="26" stroke="#444" strokeWidth="2.400"><path d="M0 2h36M0 9h36M0 17h36M0 24h36" /></svg>
            </Segment>
            <Segment type="button" aria-label="カラム" $active>
              <svg width="40" height="26" fill="none" stroke="#fff" strokeWidth="2.600"><rect x="1.500" y="1.500" width="37" height="23" rx="2" /><path d="M14 2v22M26 2v22" /></svg>
            </Segment>
          </Segments>
          <Arrange type="button" aria-label="グループ分け">
            <svg width="36" height="34" fill="none" stroke="#444" strokeWidth="2.400">
              <path d="M0 1.500h36M0 19h36" />
              <path d="M2 7h6v7H2zM15 7h6v7h-6zM28 7h6v7h-6zM2 25h6v7H2zM15 25h6v7h-6zM28 25h6v7h-6z" />
            </svg>
            <Chevron w={20} h={14} d="M3 3l7 7 7-7" />
          </Arrange>
          <PathBox>
            <svg width="39" height="32" viewBox="0 0 39 32">
              <path d="M1 2q0-1 1-1h12l3 4h20q1 0 1 1v24q0 1-1 1H2q-1 0-1-1z" fill="#74c0ee" stroke="#5aa9da" />
              <path d="M1 8h37v22q0 1-1 1H2q-1 0-1-1z" fill="#86cbf4" />
              <circle cx="19.500" cy="18" r="9" fill="#58a8df" /><path d="M17 12h5v6h4l-6.500 7L13 18h4z" fill="#86cbf4" />
            </svg>
            <select aria-label="保存場所" defaultValue="dl"><option value="dl">ダウンロード</option></select>
            {updown('#444', 3)}
          </PathBox>
          <FinderSearch><Magnifier size={32} color="#555" /><input placeholder="検索" aria-label="検索" /></FinderSearch>
        </Toolbar>
        <Browser>
          <Sidebar>
            {places.map(group => (
              <React.Fragment key={group.title}>
                <SideHeading>{group.title}</SideHeading>
                <SideList>
                  {group.items.map(([icon, label]) => (
                    <li key={label}>
                      <SideItem type="button" $active={icon === 'download'} $latin={/^[a-z]/i.test(label)}>
                        <svg width="40" height="40" viewBox="0 0 40 40">{sideIcons[icon]}</svg>
                        {label}
                      </SideItem>
                    </li>
                  ))}
                </SideList>
              </React.Fragment>
            ))}
          </Sidebar>
          <FileColumn><FileRow type="button" disabled><CsvIcon />商品データ.csv</FileRow></FileColumn>
        </Browser>
        <Options>
          <PushButton type="button">オンラインの場所</PushButton>
          <FormatLabel htmlFor="format">ファイル形式:</FormatLabel>
          <Highlight>
            <FormatSelect>
              <select id="format" defaultValue="csv"><option value="csv">コンマ区切り (.csv)</option></select>
              <Stepper>{updown('#fff', 4)}</Stepper>
            </FormatSelect>
            <FlowArrow width="46" height="118" viewBox="0 0 46 118" fill="none" strokeLinecap="round">
              <path d="M23 4v106M6 93l17 19 17-19" stroke="#fff" strokeWidth="12" />
              <path d="M23 0v108M6 93l17 19 17-19" stroke="#ff0000" strokeWidth="6" />
            </FlowArrow>
          </Highlight>
          <OptionsButtonCell><PushButton type="button">オプション...</PushButton></OptionsButtonCell>
        </Options>
        <Actions>
          <PushButton type="button">新規フォルダ</PushButton>
          <PushButton type="button" $wide>キャンセル</PushButton>
          <Highlight><PushButton type="submit" $primary $wide>保存</PushButton></Highlight>
        </Actions>
      </Dialog>
    </Overlay>
  );
};

const App = () => (
  <>
    <GlobalStyle />
    <Window>
      <Header />
      <Workbook>
        <RibbonPanel />
        <Formula />
        <SheetGrid />
        <SheetTabs>
          <Pager>
            <ToolButton type="button" aria-label="前のシート"><svg width="19" height="26"><path d="M19 0v26L0 13z" fill="#8a8a8a" /></svg></ToolButton>
            <ToolButton type="button" aria-label="次のシート"><svg width="19" height="26"><path d="M0 0v26l19-13z" fill="#8a8a8a" /></svg></ToolButton>
          </Pager>
          <SheetTab type="button">商品データ</SheetTab>
          <AddSheet type="button" aria-label="シートを追加"><svg width="26" height="26"><path d="M13 0v26M0 13h26" stroke="#5c5c5c" strokeWidth="5" /></svg></AddSheet>
        </SheetTabs>
        <SaveDialog />
      </Workbook>
      <StatusBar>
        <StatusText>コマンド</StatusText>
        <ViewButton type="button" aria-label="標準" $active $wide={92}>
          <svg width="33" height="34" fill="none" stroke="#fff" strokeWidth="2.400"><path d="M1.500 1.500h30v31h-30zM11.500 1.500v31M21.500 1.500v31M1.500 12h30M1.500 22h30" /></svg>
        </ViewButton>
        <ViewButton type="button" aria-label="ページレイアウト">
          <svg width="35" height="34" fill="none" stroke="#fff" strokeWidth="2.400"><path d="M1.500 1.500h32v31h-32zM8.500 6.500h18v21h-18zM12 12h11M12 17h11M12 22h11" /></svg>
        </ViewButton>
        <ViewButton type="button" aria-label="改ページ">
          <svg width="35" height="34" fill="none" stroke="#fff" strokeWidth="2.400"><path d="M1.500 1.500h32v31h-32zM1.500 20h20M11.500 1.500v18M21.500 1.500v18" /></svg>
        </ViewButton>
        <ViewButton type="button" aria-label="縮小" $wide={124}><svg width="21" height="20"><path d="M0 10h21" stroke="#fff" strokeWidth="5" /></svg></ViewButton>
        <ZoomSlider type="range" aria-label="ズーム" defaultValue={50} />
        <ViewButton type="button" aria-label="拡大" $wide={124}><svg width="21" height="20"><path d="M0 10h21M10.500 0v20" stroke="#fff" strokeWidth="5" /></svg></ViewButton>
        <ZoomValue>100%</ZoomValue>
      </StatusBar>
    </Window>
  </>
);

export default App;
